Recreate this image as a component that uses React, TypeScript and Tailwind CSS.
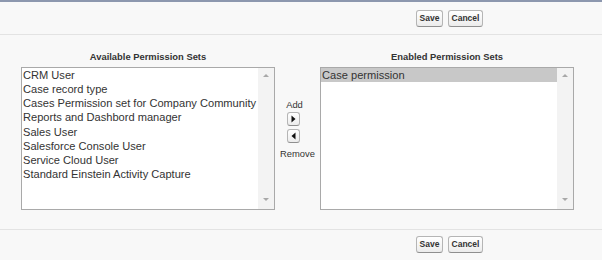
const available = [
  "CRM User",
  "Case record type",
  "Cases Permission set for Company Community",
  "Reports and Dashbord manager",
  "Sales User",
  "Salesforce Console User",
  "Service Cloud User",
  "Standard Einstein Activity Capture",
];

const enabled = ["Case permission"];

function Btn({ label, w }: { label: string; w: string }) {
  return (
    <button
      className={`${w} h-[17px] rounded-[3px] border border-[#b5b5b5] border-b-[#8f8f8f] bg-gradient-to-b from-white to-[#ececec] text-[8.5px] font-bold text-[#333] leading-none flex items-center justify-center`}
    >
      {label}
    </button>
  );
}

function ButtonBar() {
  return (
    <div className="flex gap-[5px] pl-[416px]">
      <Btn label="Save" w="w-[27px]" />
      <Btn label="Cancel" w="w-[35px]" />
    </div>
  );
}

function Arrow({ dir }: { dir: "up" | "down" }) {
  return (
    <svg width="8" height="5" viewBox="0 0 8 5">
      {dir === "up" ? (
        <polygon points="1,4 7,4 4,1" fill="#a8a8a8" />
      ) : (
        <polygon points="1,1 7,1 4,4" fill="#a8a8a8" />
      )}
    </svg>
  );
}

function ListBox({ items, selected }: { items: string[]; selected?: number }) {
  return (
    <div className="w-[254px] h-[143px] border border-[#a9a9a9] bg-white flex">
      <div className="flex-1 min-w-0 overflow-hidden flex flex-col">
        {items.map((it, i) => (
          <div
            key={it}
            className={`h-[14.15px] leading-[14px] pl-[1px] text-[11.1px] text-[#333] whitespace-nowrap ${
              i === selected ? "bg-[#c8c8c8]" : ""
            }`}
          >
            {it}
          </div>
        ))}
      </div>
      <div className="w-[16px] shrink-0 bg-[#f3f3f3] flex flex-col items-center justify-between pt-[5px] pb-[7px]">
        <Arrow dir="up" />
        <Arrow dir="down" />
      </div>
    </div>
  );
}

function MoveBtn({ dir }: { dir: "right" | "left" }) {
  return (
    <button className="w-[13px] h-[14px] rounded-[3px] border border-[#b5b5b5] border-b-[#8f8f8f] bg-gradient-to-b from-white to-[#ececec] flex items-center justify-center">
      <svg width="5" height="8" viewBox="0 0 5 8">
        {dir === "right" ? (
          <polygon points="0.5,0.5 4.5,4 0.5,7.5" fill="#111" />
        ) : (
          <polygon points="4.5,0.5 0.5,4 4.5,7.5" fill="#111" />
        )}
      </svg>
    </button>
  );
}

export default function App() {
  return (
    <div className="w-[602px] h-[260px] bg-[#f8f8f8] font-['Liberation_Sans',Arial,sans-serif] flex flex-col overflow-hidden">
      <div className="h-[2px] bg-[#8c97ae]" />
      <div className="h-[33px] pt-[8px] border-b border-[#e3e3e3]">
        <ButtonBar />
      </div>
      <div className="flex pl-[21px] pt-[15px] h-[195px] border-b border-[#e3e3e3]">
        <div className="flex flex-col">
          <p className="h-[14px] mb-[3px] text-center text-[9.4px] font-bold text-[#333] leading-[14px]">
            Available Permission Sets
          </p>
          <ListBox items={available} />
        </div>
        <div className="w-[45px] pt-[49px] flex flex-col items-center text-[9.4px] text-[#333] leading-[12px]">
          <span className="mb-[1px] -ml-[6px]">Add</span>
          <div className="-ml-[8px] flex flex-col gap-[3px]">
            <MoveBtn dir="right" />
            <MoveBtn dir="left" />
          </div>
          <span className="mt-[5px]">Remove</span>
        </div>
        <div className="flex flex-col">
          <p className="h-[14px] mb-[3px] text-center text-[9.4px] font-bold text-[#333] leading-[14px]">
            Enabled Permission Sets
          </p>
          <ListBox items={enabled} selected={0} />
        </div>
      </div>
      <div className="pt-[6px]">
        <ButtonBar />
      </div>
    </div>
  );
}
